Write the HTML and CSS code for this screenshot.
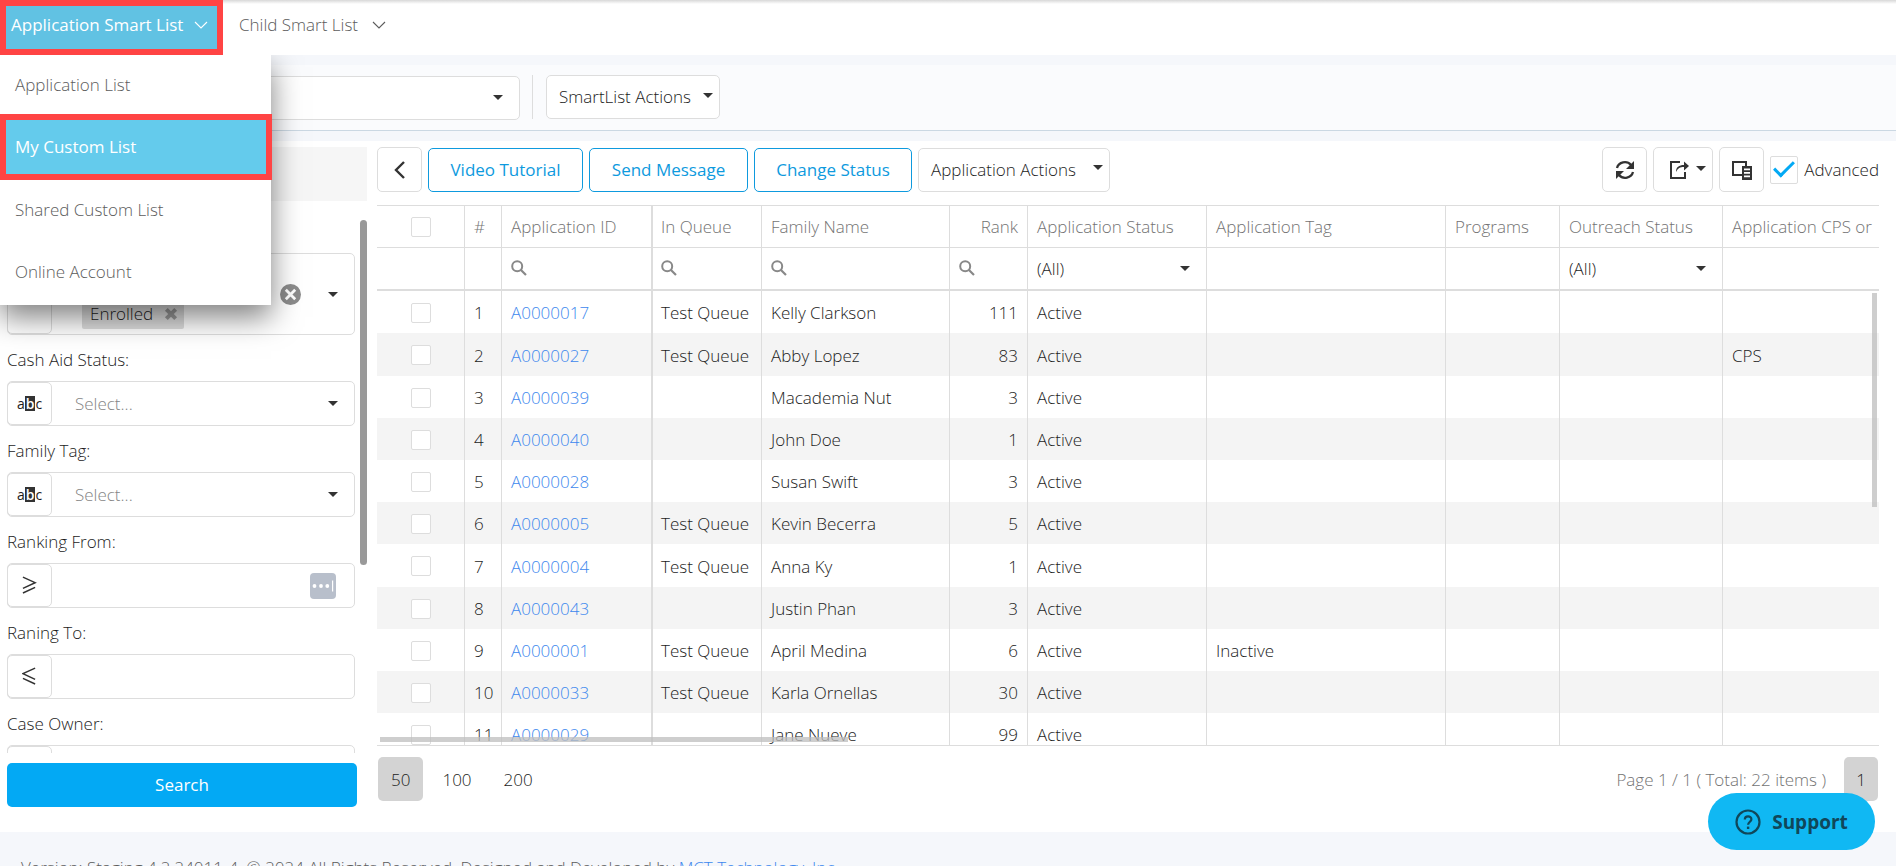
FILE: index.html
```
<!DOCTYPE html>
<html lang="en">
<head>
<meta charset="utf-8">
<title>Application Smart List</title>
<link rel="stylesheet" href="styles.css">
</head>
<body>
<svg width="0" height="0" class="sprite" aria-hidden="true">
  <symbol id="search" viewBox="0 0 16 16"><circle cx="6.2" cy="6.2" r="5" fill="none" stroke="currentColor" stroke-width="2"/><path d="M10 10l5 5" stroke="currentColor" stroke-width="2.2"/></symbol>
  <symbol id="chev" viewBox="0 0 14 8"><path d="M1 1l6 6 6-6" fill="none" stroke="currentColor" stroke-width="1.1"/></symbol>
</svg>
<div class="app">
  <nav class="topnav">
    <div class="nav-group">
      <button class="nav-item current" aria-expanded="true">Application Smart List <svg class="chev"><use href="#chev"/></svg></button>
      <div class="menu">
        <a href="#">Application List</a>
        <a href="#" class="picked">My Custom List</a>
        <a href="#">Shared Custom List</a>
        <a href="#">Online Account</a>
      </div>
    </div>
    <button class="nav-item">Child Smart List <svg class="chev"><use href="#chev"/></svg></button>
  </nav>

  <div class="listbar">
    <div class="select listpick"><select aria-label="Smart list"><option></option></select></div>
    <span class="rule"></span>
    <button class="btn drop">SmartList Actions</button>
  </div>

  <main class="work">
    <aside class="side">
      <div class="side-head"></div>
      <div class="side-body">
        <div class="fields">
          <div class="field tall">
            <button class="op" aria-label="Operator"></button>
            <div class="tags"><span class="tag">Enrolled <button aria-label="Remove"><svg viewBox="0 0 12 12"><path d="M2 2l8 8M10 2l-8 8" stroke="currentColor" stroke-width="3.4"/></svg></button></span></div>
            <button class="clear" aria-label="Clear"><svg viewBox="0 0 21 21"><circle cx="10.500" cy="10.500" r="10.500" fill="#8c8c8c"/><path d="M5.800 5.800l9.400 9.400M15.200 5.800l-9.400 9.400" stroke="#fff" stroke-width="2.800"/></svg></button>
            <span class="caret"></span>
          </div>
          <label for="cash">Cash Aid Status:</label>
          <div class="field"><button class="op abc" aria-label="Contains">a<b>b</b>c</button><div class="select"><select id="cash" class="hint"><option>Select...</option></select></div></div>
          <label for="ftag">Family Tag:</label>
          <div class="field"><button class="op abc" aria-label="Contains">a<b>b</b>c</button><div class="select"><select id="ftag" class="hint"><option>Select...</option></select></div></div>
          <label for="rfrom">Ranking From:</label>
          <div class="field"><button class="op" aria-label="Greater or equal"><svg viewBox="0 0 16 20"><path d="M1 1l13 6-13 6M14 12L1 18" fill="none" stroke="#333" stroke-width="1.600"/></svg></button><input id="rfrom" type="text">
            <svg class="pass" viewBox="0 0 26 26"><rect width="26" height="26" rx="4" fill="#b8bfcb"/><g fill="#fff"><circle cx="4.500" cy="13" r="1.900"/><circle cx="11" cy="13" r="1.900"/><circle cx="17.300" cy="13" r="1.900"/><rect x="22" y="7.500" width="1.200" height="11"/></g></svg></div>
          <label for="rto">Raning To:</label>
          <div class="field"><button class="op" aria-label="Less or equal"><svg viewBox="0 0 16 20"><path d="M14 1L1 7l13 6M1 12l13 6" fill="none" stroke="#333" stroke-width="1.600"/></svg></button><input id="rto" type="text"></div>
          <label for="owner">Case Owner:</label>
          <div class="field"><button class="op" aria-label="Operator"></button><input id="owner" type="text"></div>
        </div>
        <div class="side-scroll"></div>
      </div>
      <button class="search">Search</button>
    </aside>

    <section class="main">
      <div class="tools">
        <button class="btn icon" aria-label="Collapse"><svg width="12" height="18" viewBox="0 0 12 18"><path d="M10 1L2 9l8 8" fill="none" stroke="#333" stroke-width="2.400"/></svg></button>
        <button class="btn blue">Video Tutorial</button>
        <button class="btn blue wide">Send Message</button>
        <button class="btn blue wide">Change Status</button>
        <button class="btn drop">Application Actions</button>
        <div class="tools-right">
          <button class="btn icon" aria-label="Refresh"><svg width="20" height="20" viewBox="0 0 20 20"><path d="M2 8a8 7.500 0 0 1 14-3M18 12a8 7.500 0 0 1-14 3" fill="none" stroke="#333" stroke-width="2.300"/><path d="M19 1v8h-8zM1 19v-8h8z" fill="#333"/></svg></button>
          <button class="btn icon export" aria-label="Export"><svg width="20" height="20" viewBox="0 0 20 20"><path d="M11 2H2v16h14v-6" fill="none" stroke="#333" stroke-width="2"/><path d="M7 12c0-5 3-7 8-7V1.500l5 4.500-5 4.500V7c-4 0-6 1-8 5z" fill="#333"/></svg><span class="caret"></span></button>
          <button class="btn icon" aria-label="Column chooser"><svg width="22" height="20" viewBox="0 0 22 20"><path d="M11 15H2V2h13v4" fill="none" stroke="#333" stroke-width="2"/><path fill="#333" fill-rule="evenodd" d="M11 6h10v14H11zM13 8.500h6v1.800h-6zM13 12h6v1.800h-6zM13 15.500h6v1.800h-6z"/></svg></button>
          <label class="adv"><input type="checkbox" checked>Advanced</label>
        </div>
      </div>

      <div class="grid">
        <table>
          <colgroup><col class="w-check"><col class="w-num"><col class="w-id"><col class="w-queue"><col class="w-name"><col class="w-rank"><col class="w-status"><col class="w-tag"><col class="w-prog"><col class="w-out"><col></colgroup>
          <thead>
            <tr><th><input type="checkbox" aria-label="Select all"></th><th>#</th><th>Application ID</th><th>In Queue</th><th>Family Name</th><th>Rank</th><th>Application Status</th><th>Application Tag</th><th>Programs</th><th>Outreach Status</th><th>Application CPS or</th></tr>
            <tr class="filters"><td></td><td></td><td><svg><use href="#search"/></svg></td><td><svg><use href="#search"/></svg></td><td><svg><use href="#search"/></svg></td><td><svg><use href="#search"/></svg></td><td><div class="select"><select aria-label="Application Status filter"><option>(All)</option></select></div></td><td></td><td></td><td><div class="select"><select aria-label="Outreach Status filter"><option>(All)</option></select></div></td><td></td></tr>
          </thead>
          <tbody>
            <tr><td><input type="checkbox" aria-label="Select row 1"></td><td>1</td><td><a href="#">A0000017</a></td><td>Test Queue</td><td>Kelly Clarkson</td><td>111</td><td>Active</td><td></td><td></td><td></td><td></td></tr>
            <tr><td><input type="checkbox" aria-label="Select row 2"></td><td>2</td><td><a href="#">A0000027</a></td><td>Test Queue</td><td>Abby Lopez</td><td>83</td><td>Active</td><td></td><td></td><td></td><td>CPS</td></tr>
            <tr><td><input type="checkbox" aria-label="Select row 3"></td><td>3</td><td><a href="#">A0000039</a></td><td></td><td>Macademia Nut</td><td>3</td><td>Active</td><td></td><td></td><td></td><td></td></tr>
            <tr><td><input type="checkbox" aria-label="Select row 4"></td><td>4</td><td><a href="#">A0000040</a></td><td></td><td>John Doe</td><td>1</td><td>Active</td><td></td><td></td><td></td><td></td></tr>
            <tr><td><input type="checkbox" aria-label="Select row 5"></td><td>5</td><td><a href="#">A0000028</a></td><td></td><td>Susan Swift</td><td>3</td><td>Active</td><td></td><td></td><td></td><td></td></tr>
            <tr><td><input type="checkbox" aria-label="Select row 6"></td><td>6</td><td><a href="#">A0000005</a></td><td>Test Queue</td><td>Kevin Becerra</td><td>5</td><td>Active</td><td></td><td></td><td></td><td></td></tr>
            <tr><td><input type="checkbox" aria-label="Select row 7"></td><td>7</td><td><a href="#">A0000004</a></td><td>Test Queue</td><td>Anna Ky</td><td>1</td><td>Active</td><td></td><td></td><td></td><td></td></tr>
            <tr><td><input type="checkbox" aria-label="Select row 8"></td><td>8</td><td><a href="#">A0000043</a></td><td></td><td>Justin Phan</td><td>3</td><td>Active</td><td></td><td></td><td></td><td></td></tr>
            <tr><td><input type="checkbox" aria-label="Select row 9"></td><td>9</td><td><a href="#">A0000001</a></td><td>Test Queue</td><td>April Medina</td><td>6</td><td>Active</td><td>Inactive</td><td></td><td></td><td></td></tr>
            <tr><td><input type="checkbox" aria-label="Select row 10"></td><td>10</td><td><a href="#">A0000033</a></td><td>Test Queue</td><td>Karla Ornellas</td><td>30</td><td>Active</td><td></td><td></td><td></td><td></td></tr>
            <tr><td><input type="checkbox" aria-label="Select row 11"></td><td>11</td><td><a href="#">A0000029</a></td><td></td><td>Jane Nueve</td><td>99</td><td>Active</td><td></td><td></td><td></td><td></td></tr>
          </tbody>
        </table>
        <div class="bar-v"></div>
        <div class="bar-h"></div>
      </div>

      <div class="pager">
        <button class="on">50</button><button>100</button><button>200</button>
        <span class="info">Page 1 / 1 ( Total: 22 items )</span>
        <button class="on page">1</button>
      </div>
    </section>
  </main>

  <footer class="foot">Version: Staging 4.2.24011-4. © 2024 All Rights Reserved. Designed and Developed by <a href="#">MCT Technology, Inc.</a></footer>
</div>
<button class="support"><svg viewBox="0 0 26 26"><circle cx="13" cy="13" r="11.500" fill="none" stroke="currentColor" stroke-width="2.200"/><path d="M9.800 10.500c0-4.200 6.600-4.200 6.600-.2 0 2.400-3.300 2.600-3.300 5.500" fill="none" stroke="currentColor" stroke-width="2.200"/><rect x="11.900" y="17.600" width="2.400" height="2.400" fill="currentColor"/></svg>Support</button>
</body>
</html>
```
FILE: styles.css
```
* { box-sizing: border-box; }
html, body { margin: 0; height: 100%; overflow: hidden; }
body { font: 300 17px/24px "Open Sans", "Noto Sans", sans-serif; color: #1c1c1c; background: #fff; }
button, input, select { font: inherit; color: inherit; }
button { cursor: pointer; margin: 0; padding: 0; background: none; border: 0; }
a { color: #3d88ee; text-decoration: none; }
.sprite { position: absolute; }

.app { height: 100vh; display: flex; flex-direction: column; }

.topnav { flex: none; height: 55px; display: flex; background: linear-gradient(#d8d8d8, #fff 4px); position: relative; z-index: 3; }
.nav-group { position: relative; }
.nav-item { height: 55px; display: flex; align-items: center; gap: 14px; padding: 0 16px 5px; color: #5c5c5c; white-space: nowrap; }
.nav-item.current { width: 223px; justify-content: space-between; gap: 8px; border: 6px solid #ff4444; background: #61c2e3; color: #fff; padding: 0 9px 6px 5px; font-weight: 400; }
.chev { flex: none; width: 14px; height: 8px; }
.menu { position: absolute; top: 55px; left: 0; width: 271px; height: 250px; display: flex; flex-direction: column; background: #fff; box-shadow: 0 12px 28px rgba(0,0,0,.5); clip-path: inset(0 -60px -60px 0); }
.menu a { height: 59px; display: flex; align-items: center; padding-left: 15px; color: #5c5c5c; }
.menu a + a { height: 62px; padding-bottom: 2px; }
.menu a.picked { width: 272px; height: 66px; border: 6px solid #ff4444; padding: 0 0 0 9px; background: #64cbec; color: #fff; font-weight: 400; }

.listbar { flex: none; height: 86px; display: flex; align-items: center; border: 0 solid #f5f7fb; border-width: 10px 0; background: #fafbfd; box-shadow: inset 0 -1px #cbd8e3; padding: 0 7px 2px; }
.select { position: relative; flex: 1; display: flex; }
.select select { flex: 1; min-width: 0; appearance: none; border: 0; background: none; outline: 0; padding: 0; }
.caret, .select::after, .drop::after { content: ""; border: 5px solid transparent; border-top-color: #333; border-bottom: 0; flex: none; }
.select::after { position: absolute; right: 16px; top: 50%; margin-top: -3px; pointer-events: none; }
.listpick { flex: 0 0 513px; height: 44px; margin-top: 1px; border: 1px solid #ddd; border-radius: 5px; background: #fff; }
.rule { width: 1px; height: 44px; margin: 0 13px 0 12px; background: #ddd; }

.btn { height: 44px; border: 1px solid #ddd; border-radius: 5px; background: #fff; display: flex; align-items: center; justify-content: center; white-space: nowrap; }
.drop { gap: 12px; padding: 0 6px 0 12px; }
.drop::after { margin-top: -4px; }

.work { flex: 1; min-height: 0; display: flex; padding: 6px 17px 0 7px; background: #fff; }
.side { flex: none; width: 370px; display: flex; flex-direction: column; padding: 0 10px 25px 0; }
.side-head { flex: none; height: 54px; margin-left: -7px; background: #f6f6f6; }
.side-body { flex: 1; min-height: 0; overflow: hidden; display: flex; justify-content: space-between; align-items: flex-start; margin-bottom: 10px; }
.side-scroll { width: 7px; height: 345px; margin-top: 19px; border-radius: 4px; background: #999; }
.fields { width: 348px; padding-top: 52px; }
.fields label { display: block; margin-bottom: 9px; }
.field { height: 45px; margin-bottom: 13px; display: flex; align-items: stretch; border: 1px solid #ddd; border-radius: 5px; background: #fff; }
.field.tall { height: 82px; align-items: center; }
.op { flex: none; width: 45px; margin: 0 0 0 -1px; border: 1px solid #ddd; border-radius: 5px; display: flex; align-items: center; justify-content: center; }
.tall .op { align-self: stretch; }
.op svg { width: 15px; height: 19px; }
.abc { font: 14px/15px "Open Sans", sans-serif; }
.abc b { background: #333; color: #fff; padding: 0 1px; font-weight: 600; }
.field input { flex: 1; min-width: 0; border: 0; outline: 0; background: none; padding: 0 12px; }
.field .select select { padding-left: 23px; }
.field .hint { color: #858585; }
.pass { width: 26px; height: 26px; margin: 9px 18px 0 0; }
.tags { flex: 1; align-self: flex-end; padding: 0 0 5px 30px; }
.tag { display: inline-flex; align-items: center; gap: 11px; height: 29px; padding: 0 6px 2px 8px; background: #ddd; border-radius: 2px; }
.tag svg { width: 14px; height: 14px; color: #999; display: block; }
.clear { width: 21px; height: 21px; margin-right: 27px; }
.clear svg { display: block; }
.tall .caret { margin-right: 16px; }
.search { flex: none; height: 44px; margin-right: 10px; border-radius: 5px; background: #03a9f4; color: #fff; font-weight: 400; }

.main { flex: 1; min-width: 0; display: flex; flex-direction: column; }
.tools { flex: none; display: flex; align-items: center; gap: 6px; height: 45px; margin-bottom: 13px; }
.icon { width: 45px; height: 45px; }
.blue { width: 155px; border-color: #0e9ade; color: #0e9ade; font-weight: 400; }
.blue.wide { width: 159px; }
.tools .blue.wide + .wide { width: 158px; }
.tools .drop { width: 192px; justify-content: space-between; }
.tools-right { margin-left: auto; display: flex; align-items: center; gap: 6px; }
.export { width: 60px; gap: 7px; padding-left: 8px; }
.export .caret { margin-top: -2px; }
.adv { display: flex; align-items: center; gap: 6px; }
input[type=checkbox] { appearance: none; margin: 0; width: 20px; height: 20px; border: 1px solid #ddd; border-radius: 2px; background: #fff; display: block; flex: none; }
.adv input { width: 28px; height: 28px; display: grid; place-items: center; }
.adv input::after { content: ""; width: 17px; height: 8px; margin-bottom: 6px; border: solid #03a9f4; border-width: 0 0 3px 3px; rotate: -45deg; }

.grid { flex: 1; min-height: 0; overflow: hidden; position: relative; border: solid #ddd; border-width: 1px 0; }
table { width: 100%; table-layout: fixed; border-spacing: 0; }
.w-check { width: 88px; } .w-num { width: 37px; } .w-id { width: 151px; } .w-queue { width: 109px; } .w-name { width: 188px; } .w-rank { width: 78px; } .w-status { width: 179px; } .w-tag { width: 239px; } .w-prog { width: 114px; } .w-out { width: 163px; }
th, td { height: 42px; padding: 2px 9px 0; text-align: left; font-weight: inherit; white-space: nowrap; overflow: hidden; border-right: 1px solid #ddd; }
th { color: #737373; border-bottom: 1px solid #ddd; padding-top: 1px; }
td:nth-child(4), th:nth-child(4) { padding-left: 8px; }
.filters td { height: 43px; border-bottom: 2px solid #ddd; padding-top: 0; }
.filters svg { width: 16px; height: 16px; display: block; margin-bottom: 2px; color: #888; }
.filters .select { margin: 1px -9px 0 0; }
td:last-child, th:last-child { border-right: 0; }
th:last-child { padding-right: 0; }
td:nth-child(3), th:nth-child(3) { border-right-width: 2px; }
td:first-child, th:first-child { padding: 1px 33px 0 34px; }
th:nth-child(6), tbody td:nth-child(6) { text-align: right; }
tbody tr:nth-child(even) { background: #f4f4f4; }
tbody tr:nth-child(5n+2) td { height: 43px; }
.bar-v { position: absolute; right: 2px; top: 87px; width: 5px; height: 214px; background: rgba(190,190,190,.75); }
.bar-h { position: absolute; left: 3px; bottom: 3px; width: 468px; height: 5px; background: rgba(190,190,190,.75); }

.pager { flex: none; height: 86px; display: flex; align-items: flex-start; padding: 11px 1px 0; gap: 6px; }
.pager button { height: 44px; padding: 2px 13px 0; border-radius: 5px; min-width: 45px; }
.pager .on { background: #d3d3d3; }
.pager .page { min-width: 34px; padding: 2px 0 0; }
.info { margin: 11px 12px 0 auto; color: #737373; }

.foot { flex: none; height: 34px; padding: 24px 21px 0; background: #f5f7fb; color: #5c5c5c; white-space: nowrap; }
.support { position: absolute; right: 21px; bottom: 16px; width: 167px; height: 57px; border-radius: 29px; background: #10b8f3; color: #10475a; display: flex; align-items: center; justify-content: center; gap: 11px; font: 700 19px/24px "Open Sans", sans-serif; }
.support svg { width: 26px; height: 26px; }
```
